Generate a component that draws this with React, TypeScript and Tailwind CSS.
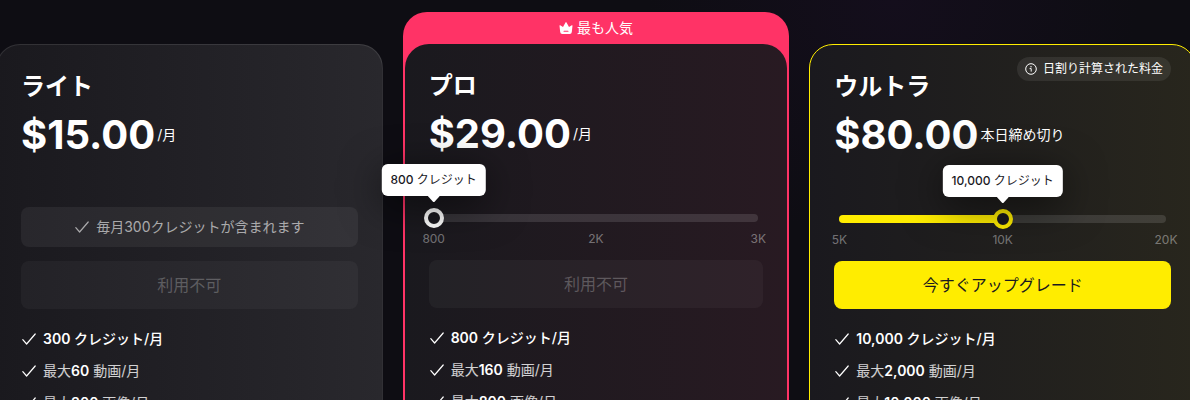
import { useState } from 'react';
import clsx from 'clsx';

type PlanId = 'lite' | 'pro' | 'ultra';

interface Stop {
  label: string;
  credits: string;
}

interface Feature {
  text: string;
  amount: string;
  unit: string;
  highlight?: boolean;
}

interface Plan {
  id: PlanId;
  name: string;
  price: string;
  suffix: string;
  badge?: string;
  included?: string;
  stops?: Stop[];
  initialStop?: number;
  cta: string;
  available: boolean;
  features: Feature[];
}

const plans: Plan[] = [
  {
    id: 'lite',
    name: 'ライト',
    price: '$15.00',
    suffix: '/月',
    included: '毎月300クレジットが含まれます',
    cta: '利用不可',
    available: false,
    features: [
      { text: '', amount: '300', unit: ' クレジット/月', highlight: true },
      { text: '最大', amount: '60', unit: ' 動画/月' },
      { text: '最大', amount: '300', unit: ' 画像/月' },
    ],
  },
  {
    id: 'pro',
    name: 'プロ',
    price: '$29.00',
    suffix: '/月',
    stops: [
      { label: '800', credits: '800' },
      { label: '2K', credits: '2,000' },
      { label: '3K', credits: '3,000' },
    ],
    initialStop: 0,
    cta: '利用不可',
    available: false,
    features: [
      { text: '', amount: '800', unit: ' クレジット/月', highlight: true },
      { text: '最大', amount: '160', unit: ' 動画/月' },
      { text: '最大', amount: '800', unit: ' 画像/月' },
    ],
  },
  {
    id: 'ultra',
    name: 'ウルトラ',
    price: '$80.00',
    suffix: '本日締め切り',
    badge: '日割り計算された料金',
    stops: [
      { label: '5K', credits: '5,000' },
      { label: '10K', credits: '10,000' },
      { label: '20K', credits: '20,000' },
    ],
    initialStop: 1,
    cta: '今すぐアップグレード',
    available: true,
    features: [
      { text: '', amount: '10,000', unit: ' クレジット/月', highlight: true },
      { text: '最大', amount: '2,000', unit: ' 動画/月' },
      { text: '最大', amount: '10,000', unit: ' 画像/月' },
    ],
  },
];

function CheckIcon() {
  return (
    <svg className="h-4 w-4 shrink-0" viewBox="0 0 16 16" fill="none" stroke="currentColor" aria-hidden="true">
      <path strokeLinecap="round" strokeLinejoin="round" strokeWidth={1.2} d="M1.8 8.6L5.6 13L14.2 3" />
    </svg>
  );
}

function CrownIcon() {
  return (
    <svg className="h-3.5 w-3.5 shrink-0" viewBox="0 0 14 14" aria-hidden="true">
      <path
        fill="currentColor"
        fillRule="evenodd"
        d="M6.5 1.4Q7 .7 7.5 1.4L10 6L12.8 4.2Q13.6 3.9 13.5 4.8L12.8 11Q12.6 13 10.8 13H3.2Q1.4 13 1.2 11L.5 4.8Q.4 3.9 1.2 4.2L4 6ZM5 9.8Q4.5 9.8 4.5 10.3T5 10.8H9Q9.5 10.8 9.5 10.3T9 9.8Z"
      />
    </svg>
  );
}

function InfoIcon() {
  return (
    <svg className="h-3 w-3 shrink-0" viewBox="0 0 12 12" fill="none" stroke="currentColor" aria-hidden="true">
      <circle cx="6" cy="6" r="5.3" strokeWidth={1} />
      <path strokeLinecap="round" strokeLinejoin="round" strokeWidth={1} d="M5 5.6H6.2V8.2" />
      <circle cx="6" cy="3.8" r="0.7" fill="currentColor" stroke="none" />
    </svg>
  );
}

function CreditSlider({ plan }: { plan: Plan }) {
  const [index, setIndex] = useState(plan.initialStop ?? 0);
  const stops = plan.stops ?? [];
  const percent = (index / (stops.length - 1)) * 100;
  const isUltra = plan.id === 'ultra';

  return (
    <div className="mx-[5px]">
      <div className="relative flex h-5 items-center">
        <div className="h-2 w-full overflow-hidden rounded-full bg-white/12">
          <div
            className={clsx('h-full', isUltra ? 'bg-[#ffed00]' : 'bg-white')}
            style={{ width: `${percent}%` }}
          />
        </div>
        {/* Input is one thumb wider than the track so the thumb is centred on each stop */}
        <input
          type="range"
          min={0}
          max={stops.length - 1}
          step={1}
          value={index}
          onChange={(e) => setIndex(Number(e.target.value))}
          aria-label={`${plan.name} クレジット`}
          className={clsx(
            'absolute inset-y-0 -left-2.5 h-5 w-[calc(100%+20px)] cursor-pointer appearance-none bg-transparent',
            '[&::-webkit-slider-thumb]:h-5 [&::-webkit-slider-thumb]:w-5 [&::-webkit-slider-thumb]:appearance-none [&::-webkit-slider-thumb]:rounded-full [&::-webkit-slider-thumb]:border-4 [&::-webkit-slider-thumb]:border-solid [&::-webkit-slider-thumb]:bg-[#1a191f]',
            isUltra
              ? '[&::-webkit-slider-thumb]:border-[#ffed00]'
              : '[&::-webkit-slider-thumb]:border-white'
          )}
        />
        <div
          className="pointer-events-none absolute bottom-8 z-10 -translate-x-1/2 rounded-md bg-white px-[9px] py-2 text-xs whitespace-nowrap text-[#1a191f] shadow-[0_8px_40px_rgba(0,0,0,0.6)]"
          style={{ left: `${percent}%` }}
        >
          <span className="font-medium">{stops[index].credits}</span> クレジット
          <svg className="absolute top-full left-1/2 h-1.5 w-3 -translate-x-1/2" viewBox="0 0 12 6" aria-hidden="true">
            <path fill="#fff" d="M0 0H12L7 5.4Q6 6.4 5 5.4Z" />
          </svg>
        </div>
      </div>
      <div className="mt-1 flex justify-between text-xs leading-3.5 text-white/40">
        {stops.map((stop) => (
          <span key={stop.label} className="flex w-0 justify-center">
            {stop.label}
          </span>
        ))}
      </div>
    </div>
  );
}

function PlanBody({ plan }: { plan: Plan }) {
  return (
    <>
      <h2 className="text-2xl leading-9 font-bold">{plan.name}</h2>
      <div className="mt-1.5 flex h-12 items-center gap-0.5">
        <span className="text-[40px] leading-12 font-bold">{plan.price}</span>
        <span className="text-sm">{plan.suffix}</span>
      </div>

      <div className="flex h-22 flex-col justify-end">
        {plan.stops ? (
          <CreditSlider plan={plan} />
        ) : (
          <div className="flex h-10 items-center justify-center gap-1.5 rounded-lg bg-white/6 text-sm text-white/60">
            <CheckIcon />
            {plan.included}
          </div>
        )}
      </div>

      <button
        type="button"
        disabled={!plan.available}
        className={clsx(
          'mt-3.5 h-12 w-full rounded-lg text-base',
          plan.available ? 'cursor-pointer bg-[#ffed00] text-[#1a191f]' : 'bg-white/4 text-white/25'
        )}
      >
        {plan.cta}
      </button>

      <ul className="mt-5 flex flex-col gap-3 text-sm">
        {plan.features.map((feature) => (
          <li key={feature.text + feature.unit} className="flex items-center gap-1.5">
            <CheckIcon />
            <span className={feature.highlight ? 'font-medium' : 'text-white/80'}>
              {feature.text}
              <strong className="font-semibold text-white">{feature.amount}</strong>
              {feature.unit}
            </span>
          </li>
        ))}
      </ul>
    </>
  );
}

function PlanCard({ plan }: { plan: Plan }) {
  if (plan.id === 'pro') {
    return (
      <section className="rounded-3xl bg-[#ff3366] px-0.5 pb-0.5">
        <p className="flex h-8 items-center justify-center gap-1 text-sm">
          <CrownIcon />
          最も人気
        </p>
        <div className="rounded-3xl bg-linear-to-r from-[#1a191e] to-[#281a22] p-6">
          <PlanBody plan={plan} />
        </div>
      </section>
    );
  }

  return (
    <section
      className={clsx(
        'relative mt-8 rounded-3xl border p-6',
        plan.id === 'ultra'
          ? 'border-[#ffed00] bg-linear-to-r from-[#1a191e] to-[#28261d]'
          : 'border-white/10 bg-linear-to-r from-[#1a191e] to-[#29282d]'
      )}
    >
      {plan.badge && (
        <p className="absolute top-3 right-6 flex h-6 items-center gap-1.5 rounded-full bg-white/8 px-2 text-xs">
          <InfoIcon />
          {plan.badge}
        </p>
      )}
      <PlanBody plan={plan} />
    </section>
  );
}

export default function App() {
  return (
    <main
      lang="ja"
      className="h-screen overflow-hidden bg-[#0e0d13] bg-[radial-gradient(circle_at_75%_0%,#140e1c,transparent_25%)] pt-3 font-[Inter,'Noto_Sans_CJK_JP',sans-serif] text-white"
    >
      <div className="-mr-1.5 -ml-1 grid grid-cols-3 gap-5">
        {plans.map((plan) => (
          <PlanCard key={plan.id} plan={plan} />
        ))}
      </div>
    </main>
  );
}
